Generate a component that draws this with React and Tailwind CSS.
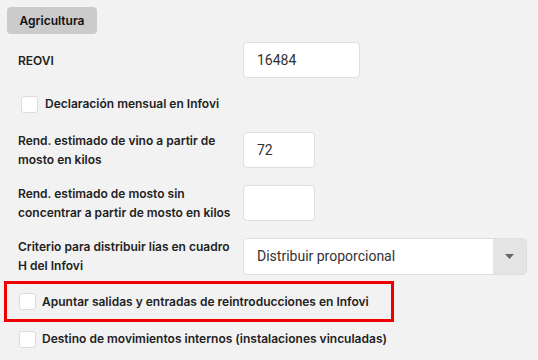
export default function App() {
  const font = { fontFamily: "Inter, 'Noto Sans', sans-serif" };
  const inputCls =
    "bg-white border border-[#dedede] rounded-[4px] h-[36px] flex items-center px-[13px] text-[14px] text-[#333] font-['Roboto',sans-serif]";
  const labelCls =
    "w-[225px] shrink-0 text-[12px] leading-[19px] font-semibold text-[#222] pr-[6px]";
  const box = (
    <div className="w-[17px] h-[17px] bg-white border border-[#dcdcdc] rounded-[3px] shrink-0" />
  );
  return (
    <div
      className="w-[538px] h-[360px] bg-[#f2f2f2] pt-[7px] overflow-hidden"
      style={font}
    >
      <div className="ml-[7px] w-[90px] h-[27px] bg-[#cbcbcb] rounded-[4px] flex items-center justify-center text-[12px] font-semibold text-[#111]">
        Agricultura
      </div>

      <div className="pl-[18px] mt-[8px] flex items-center h-[36px]">
        <div className={labelCls}>REOVI</div>
        <div className={inputCls + " w-[117px]"}>16484</div>
      </div>

      <div className="pl-[21px] mt-[14px] flex items-center h-[24px] gap-[7px]">
        {box}
        <div className="text-[12px] font-semibold text-[#222]">
          Declaración mensual en Infovi
        </div>
      </div>

      <div className="pl-[18px] mt-[15px] flex items-center h-[38px]">
        <div className={labelCls}>
          Rend. estimado de vino a partir de mosto en kilos
        </div>
        <div className={inputCls + " w-[72px]"}>72</div>
      </div>

      <div className="pl-[18px] mt-[15px] flex items-center h-[38px]">
        <div className={labelCls}>
          Rend. estimado de mosto sin concentrar a partir de mosto en kilos
        </div>
        <div className={inputCls + " w-[72px]"}></div>
      </div>

      <div className="pl-[18px] mt-[15px] flex items-center h-[38px]">
        <div className={labelCls}>
          Criterio para distribuir lías en cuadro H del Infovi
        </div>
        <div className="w-[284px] h-[37px] bg-white border border-[#dedede] rounded-[4px] flex overflow-hidden">
          <div className="flex-1 flex items-center px-[13px] text-[14px] text-[#333] font-['Roboto',sans-serif]">
            Distribuir proporcional
          </div>
          <div className="w-[33px] bg-[#e4e4e4] flex items-center justify-center">
            <svg width="9" height="5" viewBox="0 0 9 5">
              <path d="M0 0 L9 0 L4.5 5 Z" fill="#666" />
            </svg>
          </div>
        </div>
      </div>

      <div className="ml-[4px] mt-[6px] w-[390px] h-[41px] border-[3px] border-[#ee0000] flex items-center pl-[12px] gap-[6px]">
        {box}
        <div className="text-[12px] font-semibold text-[#222]">
          Apuntar salidas y entradas de reintroducciones en Infovi
        </div>
      </div>

      <div className="pl-[19px] mt-[5px] flex items-center h-[24px] gap-[6px]">
        {box}
        <div className="text-[12px] font-semibold text-[#222]">
          Destino de movimientos internos (instalaciones vinculadas)
        </div>
      </div>
    </div>
  );
}
